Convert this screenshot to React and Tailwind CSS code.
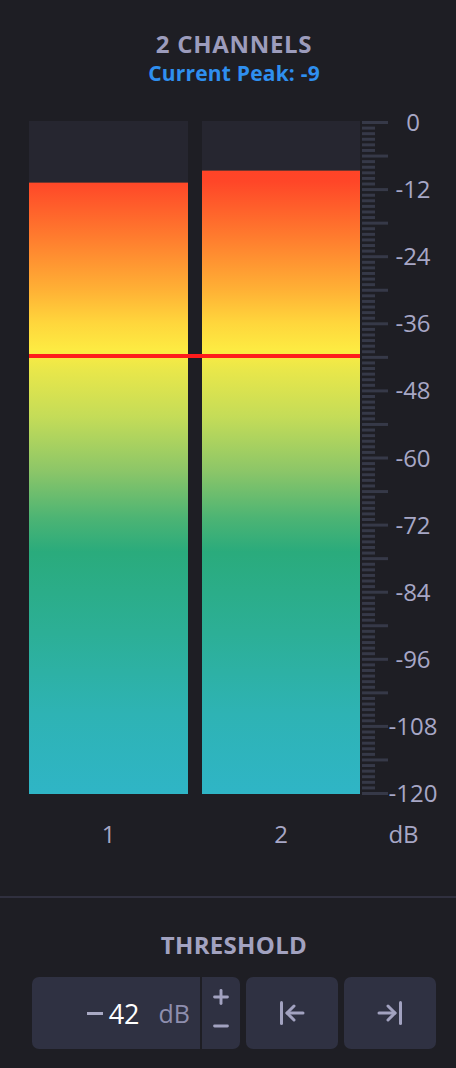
import { Plus, Minus } from 'lucide-react';

const font = { fontFamily: '"Open Sans", "Noto Sans", sans-serif' };

const MIN_DB = -120;
const METER_H = 673;
const PX_PER_DB = 671 / 120;

const channels = [
  { id: 1, level: -11 },
  { id: 2, level: -9 },
];

const threshold = -42;

const Meter = ({ level, className }) => {
  // dark cover from the top down to the current level
  const cover = (-level / -MIN_DB) * METER_H;
  return (
    <div
      className={`h-full flex flex-col bg-[linear-gradient(to_bottom,#ff3a24_0%,#ff4628_9%,#ff7a2e_17%,#ffb035_25%,#ffd63c_30%,#fdeb42_34%,#e9e74a_37%,#c4dc58_44%,#8cc668_52%,#4cb474_59%,#2aab7c_64%,#2caf96_76%,#2eb3b4_88%,#2fb5c6_100%)] ${className}`}
    >
      <div className="bg-[#262630] border-b border-[#a8412c]/60" style={{ height: cover }} />
    </div>
  );
};

const Scale = () => {
  const ticks = [];
  for (let i = 0; i <= 120; i++) {
    const long = i % 6 === 0;
    ticks.push(
      <rect
        key={i}
        x="0"
        y={i * PX_PER_DB}
        width={long ? 26 : 13}
        height="3"
        fill="#363948"
      />
    );
  }
  const labels = [];
  for (let d = 0; d <= 120; d += 12) labels.push(d);

  return (
    <div className="relative w-[94px] h-full ml-[2px]">
      <svg width="26" height={METER_H + 2} className="block">
        {ticks}
      </svg>
      {labels.map((d) => (
        <span
          key={d}
          className="absolute left-[26px] w-[50px] text-center text-[24px] leading-none text-[#a7a7c6]"
          style={{ top: d * PX_PER_DB - 11 }}
        >
          {d === 0 ? '0' : `-${d}`}
        </span>
      ))}
    </div>
  );
};

const JumpIcon = ({ flip }) => (
  <svg
    width="26"
    height="26"
    viewBox="0 0 26 26"
    fill="none"
    stroke="currentColor"
    strokeWidth="3"
    strokeLinecap="round"
    strokeLinejoin="round"
    className={flip ? '-scale-x-100' : ''}
  >
    <path d="M2.5 2.5v21" />
    <path d="M15 6l-7 7 7 7" />
    <path d="M8 13h16" />
  </svg>
);

export default function App() {
  const lineTop = (-threshold / -MIN_DB) * 671;

  return (
    <div className="w-[456px] h-[1068px] bg-[#1e1e24] flex flex-col" style={font}>
      {/* Header */}
      <div className="flex flex-col items-center pt-[27px] pl-[12px]">
        <h1 className="text-[24px] leading-[33px] font-bold tracking-[0.7px] text-[#9c9cbc]">2 CHANNELS</h1>
        <p className="text-[21px] leading-[28px] font-bold tracking-[0.2px] text-[#2f8fef] mt-[-1px]">Current Peak: -9</p>
      </div>

      {/* Meters */}
      <div className="relative flex h-[673px] mt-[34px] pl-[29px]">
        <Meter level={channels[0].level} className="w-[159px]" />
        <Meter level={channels[1].level} className="w-[158px] ml-[14px]" />
        <Scale />
        {/* threshold line */}
        <div
          className="absolute left-[29px] w-[331px] h-[4px] bg-[#ff1c1c]"
          style={{ top: lineTop - 1.5 }}
        />
      </div>

      {/* Channel labels */}
      <div className="flex pl-[29px] mt-[24px] text-[24px] leading-[32px] text-[#a7a7c6]">
        <span className="w-[159px] text-center">1</span>
        <span className="w-[158px] ml-[14px] text-center">2</span>
        <span className="w-[80px] text-center pl-[7px]">dB</span>
      </div>

      <div className="h-[2px] bg-[#30303f] mt-[46px]" />

      {/* Threshold */}
      <div className="flex flex-col items-center mt-[32px] pl-[12px]">
        <h2 className="text-[24px] leading-[30px] font-bold tracking-[0.3px] text-[#a2a2c0]">THRESHOLD</h2>
      </div>
      <div className="flex gap-[6px] mt-[17px] h-[72px] ml-[32px]">
        <div className="flex w-[208px] rounded-[7px] bg-[#2f3142] overflow-hidden">
          <div className="flex items-center justify-end w-[170px] pr-[10px] border-r-2 border-[#1e1e24]">
            <span className="w-[16px] h-[3px] bg-[#a9a9c4] mr-[6px]" />
            <span className="text-[27px] leading-none text-white">42</span>
            <span className="text-[25px] leading-none text-[#8e8eae] ml-[19px]">dB</span>
          </div>
          <div className="flex flex-col flex-1 items-center justify-between pt-[9px] pb-[12px] text-[#a2a2c0]">
            <Plus size={22} strokeWidth={3.2} />
            <Minus size={22} strokeWidth={3.2} />
          </div>
        </div>
        <button className="w-[92px] rounded-[7px] bg-[#2f3142] flex items-center justify-center text-[#a2a2c0]">
          <JumpIcon />
        </button>
        <button className="w-[92px] rounded-[7px] bg-[#2f3142] flex items-center justify-center text-[#a2a2c0]">
          <JumpIcon flip />
        </button>
      </div>
    </div>
  );
}
